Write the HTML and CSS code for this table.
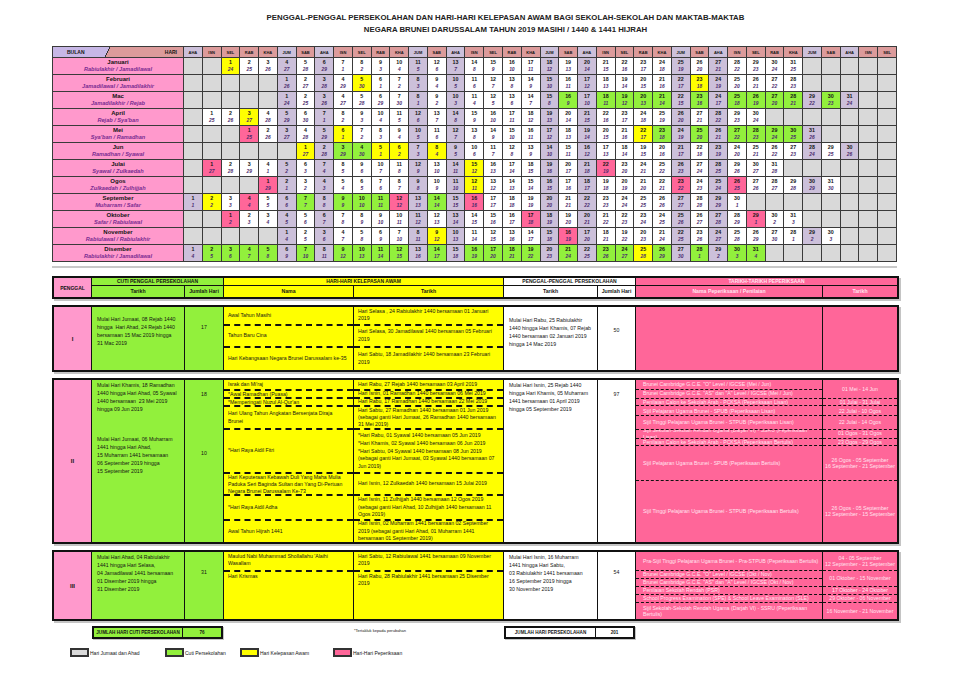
FILE: index.html
```html
<!DOCTYPE html>
<html lang="ms">
<head>
<meta charset="utf-8">
<title>Penggal Persekolahan 2019</title>
<link rel="stylesheet" href="styles.css">
</head>
<body>
<div class="page">
  <h1 class="title">PENGGAL-PENGGAL PERSEKOLAHAN DAN HARI-HARI KELEPASAN AWAM BAGI SEKOLAH-SEKOLAH DAN MAKTAB-MAKTAB<br>NEGARA BRUNEI DARUSSALAM TAHUN 2019 MASIHI / 1440 &amp; 1441 HIJRAH</h1>

  <div class="cal" id="cal"></div>
  <div class="divider"></div>

  <div class="tblock thead">
    <div class="th pink span-r">PENGGAL</div>
    <div class="th green span-c">CUTI PENGGAL PERSEKOLAHAN</div>
    <div class="th yellow span-c">HARI-HARI KELEPASAN AWAM</div>
    <div class="th white span-c">PENGGAL-PENGGAL PERSEKOLAHAN</div>
    <div class="th hot span-c">TARIKH-TARIKH PEPERIKSAAN</div>
    <div class="th green">Tarikh</div>
    <div class="th green">Jumlah Hari</div>
    <div class="th yellow">Nama</div>
    <div class="th yellow">Tarikh</div>
    <div class="th white">Tarikh</div>
    <div class="th white">Jumlah Hari</div>
    <div class="th hot">Nama Peperiksaan / Penilaian</div>
    <div class="th hot">Tarikh</div>
  </div>

  <div class="tblock b1">
    <div class="pg">I</div>
    <div class="txt green pt8">Mulai Hari Jumaat, 08 Rejab 1440<br>hingga &nbsp;Hari Ahad, 24 Rejab 1440<br>bersamaan 15 Mac 2019 hingga<br>31 Mac 2019</div>
    <div class="num green pt16">17</div>
    <div class="hlist hl1">
      <div class="hn">Awal Tahun Masihi</div><div class="ht">Hari Selasa , 24 Rabiulakhir 1440 bersamaan 01 Januari 2019</div>
      <div class="hn">Tahun Baru Cina</div><div class="ht">Hari Selasa, 30 Jamadilawal 1440 bersamaan 05 Februari 2019</div>
      <div class="hn">Hari Kebangsaan Negara Brunei Darussalam ke-35</div><div class="ht">Hari Sabtu, 18 Jamadilakhir 1440 bersamaan 23 Februari 2019</div>
    </div>
    <div class="txt white pt9">Mulai Hari Rabu, 25 Rabiulakhir<br>1440 hingga Hari Khamis, 07 Rejab<br>1440 bersamaan 02 Januari 2019<br>hingga 14 Mac 2019</div>
    <div class="num white pt19">50</div>
    <div class="xlist"><div class="xe"></div><div class="xe"></div></div>
  </div>

  <div class="tblock b2">
    <div class="pg">II</div>
    <div class="txt green pt1">
      <p>Mulai Hari Khamis, 18 Ramadhan<br>1440 hingga Hari Ahad, 05 Syawal<br>1440 bersamaan &nbsp;23 Mei 2019<br>hingga 09 Jun 2019</p>
      <p class="p2">Mulai Hari Jumaat, 06 Muharram<br>1441 hingga Hari Ahad,<br>15 Muharram 1441 bersamaan<br>06 September 2019 hingga<br>15 September 2019</p>
    </div>
    <div class="num green pt10"><p>18</p><p class="n2">10</p></div>
    <div class="hlist hl2">
      <div class="hn">Israk dan Mi'raj</div><div class="ht">Hari Rabu, 27 Rejab 1440 bersamaan 03 April 2019</div>
      <div class="hn">*Awal Ramadhan (Puasa)</div><div class="ht">Hari Isnin, 01 Ramadhan 1440 bersamaan 06 Mei 2019</div>
      <div class="hn">*Memperingati Nuzul Al-Qur'an</div><div class="ht">Hari Rabu, 17 Ramadhan 1440 bersamaan 22 Mei 2019</div>
      <div class="hn">Hari Ulang Tahun Angkatan Bersenjata Diraja<br>Brunei</div><div class="ht">Hari Sabtu, 27 Ramadhan 1440 bersamaan 01 Jun 2019 (sebagai ganti Hari Jumaat, 26 Ramadhan 1440 bersamaan 31 Mei 2019)</div>
      <div class="hn">*Hari Raya Aidil Fitri</div><div class="ht stack"><p>*Hari Rabu, 01 Syawal 1440 bersamaan 05 Jun 2019</p><p>*Hari Khamis, 02 Syawal 1440 bersamaan 06 Jun 2019</p><p>*Hari Sabtu, 04 Syawal 1440 bersamaan 08 Jun 2019 (sebagai ganti Hari Jumaat, 03 Syawal 1440 bersamaan 07 Jun 2019)</p></div>
      <div class="hn">Hari Keputeraan Kebawah Duli Yang Maha Mulia Paduka Seri Baginda Sultan dan Yang Di-Pertuan Negara Brunei Darussalam Ke-73</div><div class="ht">Hari Isnin, 12 Zulkaedah 1440 bersamaan 15 Julai 2019</div>
      <div class="hn">*Hari Raya Aidil Adha</div><div class="ht">Hari Isnin, 11 Zulhijjah 1440 bersamaan 12 Ogos 2019 (sebagai ganti Hari Ahad, 10 Zulhijjah 1440 bersamaan 11 Ogos 2019)</div>
      <div class="hn">Awal Tahun Hijrah 1441</div><div class="ht">Hari Isnin, 02 Muharram 1441 bersamaan 02 September 2019 (sebagai ganti Hari Ahad, 01 Muharram 1441 bersamaan 01 September 2019)</div>
    </div>
    <div class="txt white pt1">Mulai Hari Isnin, 25 Rejab 1440<br>hingga Hari Khamis, 05 Muharram<br>1441 bersamaan 01 April 2019<br>hingga 05 September 2019</div>
    <div class="num white pt10">97</div>
    <div class="xlist xl2">
      <div class="xn f">Brunei Cambridge G.C.E. "O" Level / IGCSE (Mei / Jun)</div><div class="xd f span2">01 Mei - 14 Jun</div>
      <div class="xn">Brunei Cambridge G.C.E. "AS" dan "A" Level / IGCSE (Mei / Jun)</div>
      <div class="xn">Penilaian Calon ke Sekolah Arab - PCKSA (Peperiksaan Lisan)</div><div class="xd">01 Julai - 31 Julai</div>
      <div class="xn">Sijil Pelajaran Ugama Brunei - SPUB (Peperiksaan Lisan)</div><div class="xd">22 Julai - 10 Ogos</div>
      <div class="xn">Sijil Tinggi Pelajaran Ugama Brunei - STPUB (Peperiksaan Lisan)</div><div class="xd">22 Julai - 14 Ogos</div>
      <div class="xn">Sijil Sekolah-Sekolah Rendah Ugama (Darjah VI) - SSRU (Peperiksaan Lisan)</div><div class="xd">01 Ogos - 31 Ogos</div>
      <div class="xn">Penilaian Calon ke Sekolah Arab - PCKSA (Peperiksaan Bertulis)</div><div class="xd">23 Ogos - 29 Ogos</div>
      <div class="xn">Sijil Pelajaran Ugama Brunei - SPUB (Peperiksaan Bertulis)</div><div class="xd">26 Ogos - 05 September<br>16 September - 21 September</div>
      <div class="xn">Sijil Tinggi Pelajaran Ugama Brunei - STPUB (Peperiksaan Bertulis)</div><div class="xd">26 Ogos - 05 September<br>12 September - 15 September</div>
    </div>
  </div>

  <div class="tblock b3">
    <div class="pg">III</div>
    <div class="txt green pt1">Mulai Hari Ahad, 04 Rabiulakhir<br>1441 hingga Hari Selasa,<br>04 Jamadilawal 1441 bersamaan<br>01 Disember 2019 hingga<br>31 Disember 2019</div>
    <div class="num green pt16">31</div>
    <div class="hlist hl3">
      <div class="hn top">Maulud Nabi Muhammad Shollallahu 'Alaihi Wasallam</div><div class="ht top">Hari Sabtu, 12 Rabiulawal 1441 bersamaan 09 November 2019</div>
      <div class="hn top">Hari Krismas</div><div class="ht top">Hari Rabu, 28 Rabiulakhir 1441 bersamaan 25 Disember 2019</div>
    </div>
    <div class="txt white pt1">Mulai Hari Isnin, 16 Muharram<br>1441 hingga Hari Sabtu,<br>03 Rabiulakhir 1441 bersamaan<br>16 September 2019 hingga<br>30 November 2019</div>
    <div class="num white pt16">54</div>
    <div class="xlist xl3">
      <div class="xn f">Pra-Sijil Tinggi Pelajaran Ugama Brunei - Pra-STPUB (Peperiksaan Bertulis)</div><div class="xd f">04 - 05 September<br>12 September - 21 September</div>
      <div class="xn">Brunei Cambridge G.C.E. "O" Level / IGCSE (Okt / Nov)</div><div class="xd span2">01 Oktober - 15 November</div>
      <div class="xn">Brunei Cambridge G.C.E. "AS" dan "A" Level / IGCSE (Okt / Nov)</div>
      <div class="xn">Penilaian Sekolah Rendah (PSR)</div><div class="xd">17 Oktober - 24 Oktober</div>
      <div class="xn">School Progress Examination (SPE) &amp; School Leave Examination (SLE)</div><div class="xd">29 Oktober - 06 November</div>
      <div class="xn">Sijil Sekolah-Sekolah Rendah Ugama (Darjah VI) - SSRU (Peperiksaan Bertulis)</div><div class="xd">16 November - 21 November</div>
    </div>
  </div>

  <div class="totals">
    <div class="tot tot-cuti"><div>JUMLAH HARI CUTI PERSEKOLAHAN</div><div>76</div></div>
    <div class="note">*Tertakluk kepada perubahan</div>
    <div class="tot tot-sek"><div>JUMLAH HARI PERSEKOLAHAN</div><div>201</div></div>
  </div>

  <div class="legend">
    <div class="lg lg1"><span class="sw sw-gray"></span>Hari Jumaat dan Ahad</div>
    <div class="lg lg2"><span class="sw sw-green"></span>Cuti Persekolahan</div>
    <div class="lg lg3"><span class="sw sw-yellow"></span>Hari Kelepasan Awam</div>
    <div class="lg"><span class="sw sw-pink"></span>Hari-Hari Peperiksaan</div>
  </div>
</div>
<script src="calendar.js"></script>
</body>
</html>
```

FILE: styles.css
```css
* { box-sizing: border-box; margin: 0; padding: 0; }
body { background: #fff; font-family: "Liberation Sans", Arial, sans-serif; color: #151515; }
.page { width: 960px; height: 678px; padding: 12px 0 0 52px; overflow: hidden; }

.title { width: 845px; padding-left: 62px; text-align: center; font-size: 7.8px; font-weight: bold; line-height: 12px; color: #222; margin-bottom: 10px; }

/* calendar */
.cal { width: 845px; display: grid; grid-template-columns: 130px repeat(38, 1fr); grid-template-rows: 10px repeat(12, 16px); gap: 1px; background: #3a3a3a; border: 1px solid #3a3a3a; }
.c-bh { background: linear-gradient(118deg, #c7b7e6 0, #c7b7e6 50px, #333 50px, #333 51px, #dc9b9b 51px); display: flex; justify-content: space-between; align-items: center; padding: 0 6px 0 14px; font-size: 5px; font-weight: bold; }
.c-wd { background: #dc9b9b; font-size: 4px; font-weight: bold; display: flex; align-items: center; justify-content: center; }
.c-mon { background: #ff99cc; display: flex; flex-direction: column; align-items: center; justify-content: center; }
.c-mon b { font-size: 6px; line-height: 7.5px; }
.c-mon i { font-size: 5.6px; font-weight: bold; color: #7a2c91; line-height: 7.5px; }
.c-day { background: #fff; display: flex; flex-direction: column; align-items: center; justify-content: center; }
.c-day b { font-size: 5.3px; line-height: 7.5px; }
.c-day i { font-size: 4.9px; font-weight: bold; color: #4b2b6d; line-height: 7.5px; }
.empty { background: #d9d9d9; }
.lav { background: #ccc0da; }
.hol { background: #ffff00; }
.cuti { background: #92f03c; }
.exam { background: #ff6699; }

.divider { width: 845px; height: 2px; margin-top: 4px; background: #c8c8c8; }

/* term tables */
.tblock { width: 847px; display: grid; grid-template-columns: 37px 92px 38px 129px 149px 93px 37px 186px 74px; grid-template-rows: minmax(0, 1fr); column-gap: 1px; background: #111; border: 2px solid #111; box-shadow: 2px 2px 0 #c4c4c4; font-size: 5.2px; line-height: 8px; overflow: hidden; }
.thead { height: 23px; margin-top: 8px; grid-template-rows: minmax(0, 8fr) minmax(0, 13fr); row-gap: 1px; }
.b1 { height: 67px; margin-top: 6px; }
.b2 { height: 166px; margin-top: 6px; }
.b3 { height: 71px; margin-top: 6px; }

.th { display: flex; align-items: center; justify-content: center; font-weight: bold; font-size: 5.2px; white-space: nowrap; }
.span-r { grid-row: span 2; font-size: 5px; }
.span-c { grid-column: span 2; font-size: 5px; }
.pink { background: #ff99cc; }
.green { background: #92f03c; }
.yellow { background: #ffff00; }
.white { background: #fff; }
.hot { background: #ff6699; color: #ffe4ef; }

.pg { background: #ff99cc; display: flex; align-items: center; justify-content: center; font-weight: bold; font-size: 6px; }
.txt { padding-left: 5px; white-space: nowrap; overflow: hidden; }
.num { text-align: center; }
.pt1 { padding-top: 1px; }
.pt8 { padding-top: 8px; }
.pt9 { padding-top: 9px; }
.pt10 { padding-top: 10px; }
.pt16 { padding-top: 16px; }
.pt19 { padding-top: 19px; }
.p2 { margin-top: 22px; }
.n2 { margin-top: 51px; }

.hlist { grid-column: span 2; display: grid; grid-template-columns: 129px 1fr; column-gap: 1px; background: #111; line-height: 7.3px; min-height: 0; }
.hl1 { grid-template-rows: minmax(0, 18fr) minmax(0, 23fr) minmax(0, 26fr); }
.hl2 { grid-template-rows: minmax(0, 9fr) minmax(0, 8fr) minmax(0, 9fr) minmax(0, 23fr) minmax(0, 45fr) minmax(0, 23fr) minmax(0, 25fr) minmax(0, 24fr); }
.hl3 { grid-template-rows: minmax(0, 19fr) minmax(0, 52fr); }
.hn, .ht { background: #ffff00; display: flex; align-items: center; padding: 0 2px 0 4px; overflow: hidden; }
.hn { display: block; align-content: center; }
.hlist > div:nth-child(n+3) { border-top: 2px dashed #111; }
.hn.top, .ht.top { align-content: flex-start; align-items: flex-start; padding-top: 1px; }
.ht.stack { flex-direction: column; align-items: flex-start; justify-content: center; gap: 1px; }

.xlist { grid-column: span 2; display: grid; grid-template-columns: 186px 1fr; column-gap: 1px; background: #111; line-height: 6.4px; color: #ffe4ef; min-height: 0; }
.xl2 { grid-template-rows: minmax(0, 9fr) minmax(0, 9fr) minmax(0, 8fr) minmax(0, 10fr) minmax(0, 14fr) minmax(0, 9fr) minmax(0, 8fr) minmax(0, 35fr) minmax(0, 64fr); }
.xl3 { grid-template-rows: minmax(0, 19fr) minmax(0, 9fr) minmax(0, 8fr) minmax(0, 8fr) minmax(0, 9fr) minmax(0, 18fr); }
.xe, .xn, .xd { background: #ff6699; overflow: hidden; }
.xn, .xd { display: flex; align-items: center; border-top: 1.5px dashed #111; }
.xn { padding: 0 3px 0 7px; }
.xd { justify-content: center; text-align: center; padding: 0 1px; }
.xn.f, .xd.f { border-top: 0; }
.xd.span2 { grid-row: span 2; }

/* totals */
.totals { display: grid; grid-template-columns: 37px 92px 38px 129px 149px 93px 37px 186px 74px; column-gap: 1px; padding: 0 2px; margin-top: 5px; height: 13px; font-size: 4.6px; font-weight: bold; }
.tot { display: grid; gap: 1px; background: #111; border: 2px solid #111; box-shadow: 1px 1px 0 #c4c4c4; }
.tot > div { display: flex; align-items: center; justify-content: center; white-space: nowrap; }
.tot-cuti { grid-column: 2 / 4; grid-template-columns: 1fr 38px; }
.tot-cuti > div { background: #92f03c; }
.tot-sek { grid-column: 6 / 8; grid-template-columns: 1fr 37px; }
.tot-sek > div { background: #fff; }
.note { grid-column: 5 / 6; font-size: 4px; font-weight: normal; padding-top: 2px; }

/* legend */
.legend { display: flex; align-items: center; margin-top: 9px; padding-left: 18px; height: 9px; font-size: 5px; }
.lg { display: flex; align-items: center; white-space: nowrap; }
.lg1 { width: 95px; }
.lg2 { width: 75px; }
.lg3 { width: 93px; }
.sw { width: 19px; height: 9px; border: 2px solid #333; margin-right: 1px; }
.sw-gray { background: #d9d9d9; }
.sw-green { background: #92f03c; }
.sw-yellow { background: #ffff00; }
.sw-pink { background: #ff6699; }
```

FILE: calendar.js
```js
(function () {
  var cal = document.getElementById('cal');
  var days = ['AHA', 'ISN', 'SEL', 'RAB', 'KHA', 'JUM', 'SAB'];
  var months = [
    ['Januari', 'Rabiulakhir / Jamadilawal'],
    ['Februari', 'Jamadilawal / Jamadilakhir'],
    ['Mac', 'Jamadilakhir / Rejab'],
    ['April', "Rejab / Sya'ban"],
    ['Mei', "Sya'ban / Ramadhan"],
    ['Jun', 'Ramadhan / Syawal'],
    ['Julai', 'Syawal / Zulkaedah'],
    ['Ogos', 'Zulkaedah / Zulhijjah'],
    ['September', 'Muharram / Safar'],
    ['Oktober', 'Safar / Rabiulawal'],
    ['November', 'Rabiulawal / Rabiulakhir'],
    ['Disember', 'Rabiulakhir / Jamadilawal']
  ];
  var hs = [[2018, 11, 9], [2019, 0, 7], [2019, 1, 6], [2019, 2, 8], [2019, 3, 7], [2019, 4, 6], [2019, 5, 5],
    [2019, 6, 4], [2019, 7, 2], [2019, 8, 1], [2019, 8, 30], [2019, 9, 29], [2019, 10, 28], [2019, 11, 28]]
    .map(function (a) { return Date.UTC(a[0], a[1], a[2]); });
  var Y = ['1-1', '2-5', '2-23', '4-3', '5-6', '5-22', '6-1', '6-5', '6-6', '6-8', '7-15', '8-12', '9-2', '11-9', '12-25'];
  var P = ['5-1', '7-1', '7-22', '8-1', '8-23', '8-26', '9-4', '9-12', '9-16', '10-1', '10-17', '10-29', '11-16'];
  var G = [[3, 15, 31], [5, 23, 31], [6, 1, 9], [9, 6, 15], [12, 1, 31]];

  function el(cls, html) {
    var d = document.createElement('div');
    d.className = cls;
    if (html != null) d.innerHTML = html;
    return d;
  }

  cal.appendChild(el('c-bh', '<span>BULAN</span><span>HARI</span>'));
  for (var i = 0; i < 38; i++) {
    var w = i % 7;
    cal.appendChild(el('c-wd' + ((w === 0 || w === 5) ? ' lav' : ''), days[w]));
  }

  months.forEach(function (m, mi) {
    cal.appendChild(el('c-mon', '<b>' + m[0] + '</b><i>' + m[1] + '</i>'));
    var first = new Date(Date.UTC(2019, mi, 1)).getUTCDay();
    var n = new Date(Date.UTC(2019, mi + 1, 0)).getUTCDate();
    for (var c = 0; c < 38; c++) {
      var d = c - first + 1;
      if (d < 1 || d > n) { cal.appendChild(el('c-day empty')); continue; }
      var t = Date.UTC(2019, mi, d), wd = c % 7, key = (mi + 1) + '-' + d, cls = 'c-day';
      var h = 1;
      for (var k = 0; k < hs.length; k++) if (hs[k] <= t) h = Math.round((t - hs[k]) / 864e5) + 1;
      var weekend = (wd === 0 || wd === 5);
      var green = G.some(function (g) { return g[0] === mi + 1 && d >= g[1] && d <= g[2]; });
      if (P.indexOf(key) >= 0) cls += ' exam';
      else if (Y.indexOf(key) >= 0) cls += ' hol';
      else if (weekend) cls += ' lav';
      else if (green) cls += ' cuti';
      cal.appendChild(el(cls, '<b>' + d + '</b><i>' + h + '</i>'));
    }
  });
})();
```
